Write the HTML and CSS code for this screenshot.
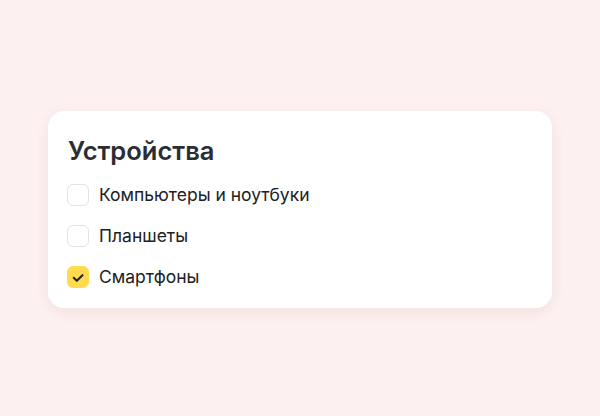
FILE: index.html
```html
<!DOCTYPE html>
<html lang="ru">
<head>
<meta charset="utf-8">
<link rel="stylesheet" href="styles.css">
</head>
<body>
<div class="page">
  <section class="card">
    <h2 class="title">Устройства</h2>
    <ul class="list">
      <li class="item"><span class="box"></span><span class="label">Компьютеры и ноутбуки</span></li>
      <li class="item"><span class="box"></span><span class="label">Планшеты</span></li>
      <li class="item"><span class="box checked"><svg viewBox="0 0 22 22" width="22" height="22"><path d="M6.3 11.8 L9.7 15.2 L15.9 9" fill="none" stroke="#21201f" stroke-width="2.2" stroke-linecap="round" stroke-linejoin="round"/></svg></span><span class="label">Смартфоны</span></li>
    </ul>
  </section>
</div>
</body>
</html>
```
FILE: styles.css
```css
html, body {
  margin: 0;
  padding: 0;
}
body {
  background: #fdf0f0;
  font-family: Inter, "Noto Sans", sans-serif;
  color: #21201f;
}
.page {
  width: 600px;
  height: 416px;
  box-sizing: border-box;
  padding-top: 2px;
  display: flex;
  align-items: center;
  justify-content: center;
}
.card {
  width: 504px;
  box-sizing: border-box;
  background: #fff;
  border-radius: 16px;
  box-shadow: 0 4px 14px rgba(120, 60, 60, 0.08);
  padding: 25px 20px 20px 19px;
}
.title {
  margin: 0 0 0 1px;
  font-size: 25.5px;
  line-height: 30px;
  font-weight: 600;
  color: #2b2d33;
}
.list {
  list-style: none;
  margin: 18px 0 0 0;
  padding: 0;
  display: flex;
  flex-direction: column;
  gap: 19px;
}
.item {
  display: flex;
  align-items: center;
  gap: 10px;
  height: 22px;
}
.box {
  width: 22px;
  height: 22px;
  box-sizing: border-box;
  border: 1px solid #e3e3e3;
  border-radius: 6px;
  display: flex;
  align-items: center;
  justify-content: center;
}
.box.checked {
  background: #ffdb4d;
  border-color: #ffdb4d;
}
.box svg {
  display: block;
}
.label {
  font-size: 17.5px;
  line-height: 22px;
  color: #21201f;
}
```
